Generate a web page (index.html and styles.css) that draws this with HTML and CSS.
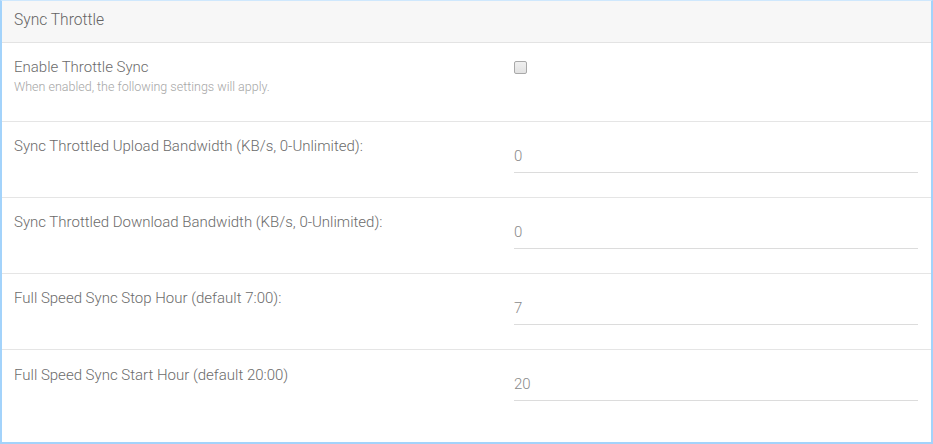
FILE: index.html
```html
<!DOCTYPE html>
<html>
<head>
<meta charset="utf-8">
<link rel="stylesheet" href="styles.css">
</head>
<body>
<div class="panel">
  <div class="panel-heading">Sync Throttle</div>
  <div class="row row-first">
    <div class="label-col">
      <div class="label">Enable Throttle Sync</div>
      <div class="help">When enabled, the following settings will apply.</div>
    </div>
    <div class="field-col">
      <span class="checkbox"></span>
    </div>
  </div>
  <div class="row">
    <div class="label-col"><div class="label">Sync Throttled Upload Bandwidth (KB/s, 0-Unlimited):</div></div>
    <div class="field-col"><div class="input">0</div></div>
  </div>
  <div class="row">
    <div class="label-col"><div class="label">Sync Throttled Download Bandwidth (KB/s, 0-Unlimited):</div></div>
    <div class="field-col"><div class="input">0</div></div>
  </div>
  <div class="row">
    <div class="label-col"><div class="label">Full Speed Sync Stop Hour (default 7:00):</div></div>
    <div class="field-col"><div class="input">7</div></div>
  </div>
  <div class="row row-last">
    <div class="label-col"><div class="label">Full Speed Sync Start Hour (default 20:00)</div></div>
    <div class="field-col"><div class="input">20</div></div>
  </div>
</div>
</body>
</html>
```

FILE: styles.css
```css
html, body {
  margin: 0;
  padding: 0;
  background: #fff;
}
body {
  font-family: Roboto, "Liberation Sans", sans-serif;
  font-weight: 300;
  color: #555;
}
.panel {
  width: 933px;
  height: 444px;
  box-sizing: border-box;
  border: 2px solid #a3d3fb;
  border-top: 1px solid #cfe8fd;
  overflow: hidden;
}
.panel-heading {
  height: 42px;
  box-sizing: border-box;
  background: #f7f7f7;
  border-bottom: 1px solid #e3e3e3;
  padding: 9px 12px 0;
  font-size: 15.6px;
  line-height: 20px;
  color: #646464;
  font-weight: 300;
}
.row {
  display: grid;
  grid-template-columns: 1fr 404px;
  column-gap: 12px;
  padding: 14px 13px 24px 12px;
  border-bottom: 1px solid #e5e5e5;
}
.row-first {
  padding-bottom: 26px;
}
.row-last {
  border-bottom: none;
  padding-top: 15px;
}
.label {
  font-size: 15px;
  line-height: 20px;
  color: #6b6b6b;
}
.help {
  margin-top: 2px;
  font-size: 12.5px;
  line-height: 16px;
  color: #a6a6a6;
}
.checkbox {
  display: block;
  width: 11px;
  height: 11px;
  margin-top: 4px;
  border: 1px solid #a9a9a9;
  border-radius: 2px;
  background: linear-gradient(#f0f0f0, #e2e2e2);
}
.input {
  margin-top: 3px;
  height: 34px;
  box-sizing: border-box;
  border-bottom: 1px solid #dcdcdc;
  padding-top: 8px;
  font-size: 15px;
  line-height: 18px;
  color: #8a8a8a;
}
.row-last .input {
  margin-top: 2px;
}
```
